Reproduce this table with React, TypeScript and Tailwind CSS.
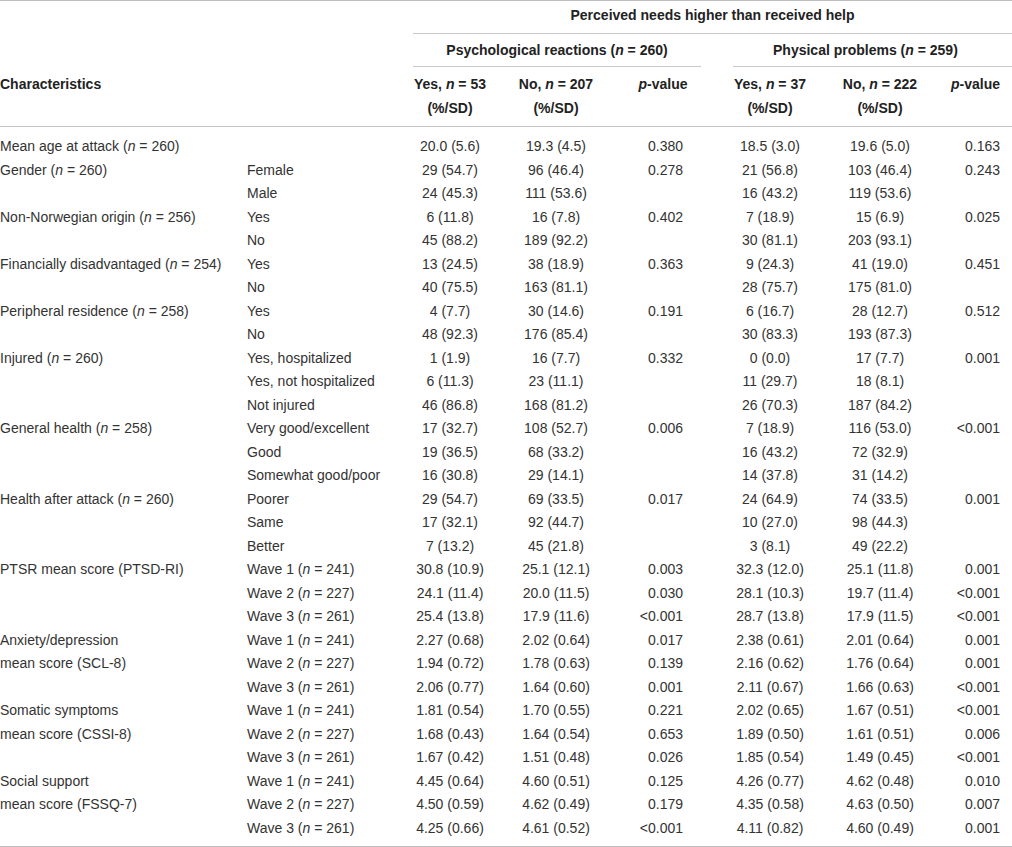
import React from "react";

type Row = [string, string, string, string, string, string, string, string];

const rows: Row[] = [
  ["Mean age at attack (n = 260)", "", "20.0 (5.6)", "19.3 (4.5)", "0.380", "18.5 (3.0)", "19.6 (5.0)", "0.163"],
  ["Gender (n = 260)", "Female", "29 (54.7)", "96 (46.4)", "0.278", "21 (56.8)", "103 (46.4)", "0.243"],
  ["", "Male", "24 (45.3)", "111 (53.6)", "", "16 (43.2)", "119 (53.6)", ""],
  ["Non-Norwegian origin (n = 256)", "Yes", "6 (11.8)", "16 (7.8)", "0.402", "7 (18.9)", "15 (6.9)", "0.025"],
  ["", "No", "45 (88.2)", "189 (92.2)", "", "30 (81.1)", "203 (93.1)", ""],
  ["Financially disadvantaged (n = 254)", "Yes", "13 (24.5)", "38 (18.9)", "0.363", "9 (24.3)", "41 (19.0)", "0.451"],
  ["", "No", "40 (75.5)", "163 (81.1)", "", "28 (75.7)", "175 (81.0)", ""],
  ["Peripheral residence (n = 258)", "Yes", "4 (7.7)", "30 (14.6)", "0.191", "6 (16.7)", "28 (12.7)", "0.512"],
  ["", "No", "48 (92.3)", "176 (85.4)", "", "30 (83.3)", "193 (87.3)", ""],
  ["Injured (n = 260)", "Yes, hospitalized", "1 (1.9)", "16 (7.7)", "0.332", "0 (0.0)", "17 (7.7)", "0.001"],
  ["", "Yes, not hospitalized", "6 (11.3)", "23 (11.1)", "", "11 (29.7)", "18 (8.1)", ""],
  ["", "Not injured", "46 (86.8)", "168 (81.2)", "", "26 (70.3)", "187 (84.2)", ""],
  ["General health (n = 258)", "Very good/excellent", "17 (32.7)", "108 (52.7)", "0.006", "7 (18.9)", "116 (53.0)", "<0.001"],
  ["", "Good", "19 (36.5)", "68 (33.2)", "", "16 (43.2)", "72 (32.9)", ""],
  ["", "Somewhat good/poor", "16 (30.8)", "29 (14.1)", "", "14 (37.8)", "31 (14.2)", ""],
  ["Health after attack (n = 260)", "Poorer", "29 (54.7)", "69 (33.5)", "0.017", "24 (64.9)", "74 (33.5)", "0.001"],
  ["", "Same", "17 (32.1)", "92 (44.7)", "", "10 (27.0)", "98 (44.3)", ""],
  ["", "Better", "7 (13.2)", "45 (21.8)", "", "3 (8.1)", "49 (22.2)", ""],
  ["PTSR mean score (PTSD-RI)", "Wave 1 (n = 241)", "30.8 (10.9)", "25.1 (12.1)", "0.003", "32.3 (12.0)", "25.1 (11.8)", "0.001"],
  ["", "Wave 2 (n = 227)", "24.1 (11.4)", "20.0 (11.5)", "0.030", "28.1 (10.3)", "19.7 (11.4)", "<0.001"],
  ["", "Wave 3 (n = 261)", "25.4 (13.8)", "17.9 (11.6)", "<0.001", "28.7 (13.8)", "17.9 (11.5)", "<0.001"],
  ["Anxiety/depression", "Wave 1 (n = 241)", "2.27 (0.68)", "2.02 (0.64)", "0.017", "2.38 (0.61)", "2.01 (0.64)", "0.001"],
  ["mean score (SCL-8)", "Wave 2 (n = 227)", "1.94 (0.72)", "1.78 (0.63)", "0.139", "2.16 (0.62)", "1.76 (0.64)", "0.001"],
  ["", "Wave 3 (n = 261)", "2.06 (0.77)", "1.64 (0.60)", "0.001", "2.11 (0.67)", "1.66 (0.63)", "<0.001"],
  ["Somatic symptoms", "Wave 1 (n = 241)", "1.81 (0.54)", "1.70 (0.55)", "0.221", "2.02 (0.65)", "1.67 (0.51)", "<0.001"],
  ["mean score (CSSI-8)", "Wave 2 (n = 227)", "1.68 (0.43)", "1.64 (0.54)", "0.653", "1.89 (0.50)", "1.61 (0.51)", "0.006"],
  ["", "Wave 3 (n = 261)", "1.67 (0.42)", "1.51 (0.48)", "0.026", "1.85 (0.54)", "1.49 (0.45)", "<0.001"],
  ["Social support", "Wave 1 (n = 241)", "4.45 (0.64)", "4.60 (0.51)", "0.125", "4.26 (0.77)", "4.62 (0.48)", "0.010"],
  ["mean score (FSSQ-7)", "Wave 2 (n = 227)", "4.50 (0.59)", "4.62 (0.49)", "0.179", "4.35 (0.58)", "4.63 (0.50)", "0.007"],
  ["", "Wave 3 (n = 261)", "4.25 (0.66)", "4.61 (0.52)", "<0.001", "4.11 (0.82)", "4.60 (0.49)", "0.001"],
];

// "(n = 260)" -> italic n
function Label({ text }: { text: string }) {
  const i = text.indexOf("(n = ");
  if (i < 0) return <>{text}</>;
  return (
    <>
      {text.slice(0, i)}(<i>n</i> = {text.slice(i + 5)}
    </>
  );
}

const cols = "grid grid-cols-[247px_166px_74px_138px_76px_138px_82px_79px_12px]";

export default function App() {
  return (
    <div className="w-[1012px] bg-white text-[#333] text-[14px] font-['Liberation_Sans',Arial,sans-serif]">
      <div className="border-t border-b border-[#bdbdbd]">
        {/* header */}
        <div className={`${cols} font-bold text-[#222]`}>
          <div className="col-span-2" />
          <div className="col-span-7 h-[33px] flex items-center justify-center pb-[3px] border-b border-[#c8c8c8]">
            Perceived needs higher than received help
          </div>
        </div>
        <div className={`${cols} font-bold text-[#222]`}>
          <div className="col-span-2" />
          <div className="col-span-3 h-[33px] flex items-center justify-center border-b border-[#c8c8c8]">
            <span>Psychological reactions (<i>n</i> = 260)</span>
          </div>
          <div className="col-span-4 ml-[32px] h-[33px] flex items-center pl-[40px] border-b border-[#c8c8c8]">
            <span>Physical problems (<i>n</i> = 259)</span>
          </div>
        </div>
        <div className={`${cols} font-bold text-[#222] pt-[5px] pb-[6px] leading-[24px] border-b border-[#c4c4c4]`}>
          <div>Characteristics</div>
          <div />
          <div className="text-center">Yes, <i>n</i> = 53<br />(%/SD)</div>
          <div className="text-center">No, <i>n</i> = 207<br />(%/SD)</div>
          <div className="text-center"><i>p</i>-value</div>
          <div className="text-center">Yes, <i>n</i> = 37<br />(%/SD)</div>
          <div className="text-center">No, <i>n</i> = 222<br />(%/SD)</div>
          <div className="text-right"><i>p</i>-value</div>
          <div />
        </div>
        {/* body */}
        <div className="pt-[8px] pb-[6px]">
          {rows.map((r, k) => (
            <div key={k} className={`${cols} h-[23.5px] items-center whitespace-nowrap`}>
              <div><Label text={r[0]} /></div>
              <div><Label text={r[1]} /></div>
              <div className="text-center">{r[2]}</div>
              <div className="text-center">{r[3]}</div>
              <div className="text-right pr-[18px]">{r[4]}</div>
              <div className="text-center">{r[5]}</div>
              <div className="text-center">{r[6]}</div>
              <div className="text-right">{r[7]}</div>
              <div />
            </div>
          ))}
        </div>
      </div>
    </div>
  );
}
